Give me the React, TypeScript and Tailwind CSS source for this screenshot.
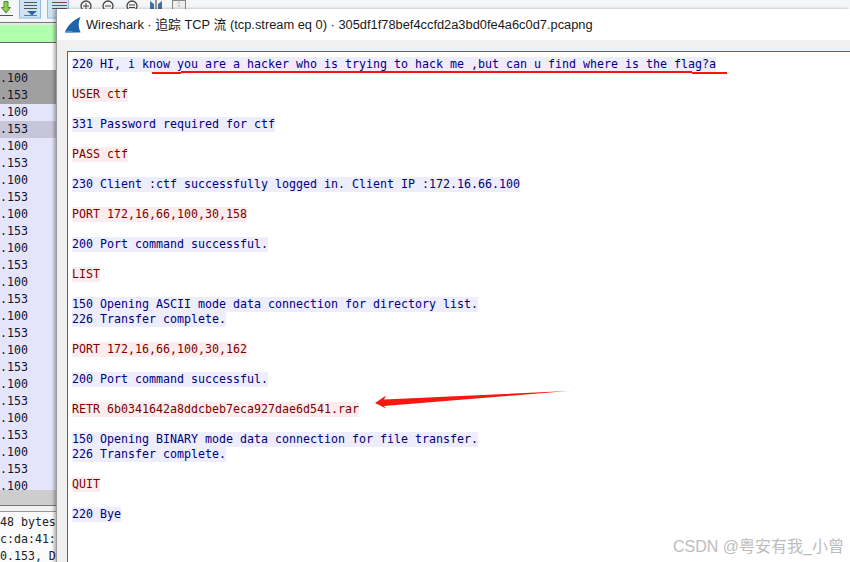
const packets = [
  {text: '.100', bg: 'bg-[#a0a0a0]'},
  {text: '.153', bg: 'bg-[#a0a0a0]'},
  {text: '.100', bg: 'bg-[#e4e4fa]'},
  {text: '.153', bg: 'bg-[#c6c6d8]'},
  ...Array.from({length: 21}, (_, i) => ({
    text: i % 2 === 0 ? '.100' : '.153',
    bg: 'bg-[#e4e4fa]',
  })),
]

// c = client (red), s = server (blue), blank = empty line
const stream: {kind: 'c' | 's' | 'blank'; text?: string}[] = [
  {kind: 's', text: '220 HI, i know you are a hacker who is trying to hack me ,but can u find where is the flag?a'},
  {kind: 'blank'},
  {kind: 'c', text: 'USER ctf'},
  {kind: 'blank'},
  {kind: 's', text: '331 Password required for ctf'},
  {kind: 'blank'},
  {kind: 'c', text: 'PASS ctf'},
  {kind: 'blank'},
  {kind: 's', text: '230 Client :ctf successfully logged in. Client IP :172.16.66.100'},
  {kind: 'blank'},
  {kind: 'c', text: 'PORT 172,16,66,100,30,158'},
  {kind: 'blank'},
  {kind: 's', text: '200 Port command successful.'},
  {kind: 'blank'},
  {kind: 'c', text: 'LIST'},
  {kind: 'blank'},
  {kind: 's', text: '150 Opening ASCII mode data connection for directory list.'},
  {kind: 's', text: '226 Transfer complete.'},
  {kind: 'blank'},
  {kind: 'c', text: 'PORT 172,16,66,100,30,162'},
  {kind: 'blank'},
  {kind: 's', text: '200 Port command successful.'},
  {kind: 'blank'},
  {kind: 'c', text: 'RETR 6b0341642a8ddcbeb7eca927dae6d541.rar'},
  {kind: 'blank'},
  {kind: 's', text: '150 Opening BINARY mode data connection for file transfer.'},
  {kind: 's', text: '226 Transfer complete.'},
  {kind: 'blank'},
  {kind: 'c', text: 'QUIT'},
  {kind: 'blank'},
  {kind: 's', text: '220 Bye'},
]

function ToolbarIcons() {
  return (
    <svg width="200" height="22" viewBox="0 0 200 22">
      {/* go to last packet arrow */}
      <path d="M4 1.5h4v6h2.5L6 13 1.5 7.5H4z" fill="#8fce55" stroke="#4f8a2c" strokeWidth="1" />
      <path d="M0 15.5h13" stroke="#555" />
      {/* auto scroll */}
      <rect x="19.5" y="-1" width="21" height="19" fill="#cde4f7" stroke="#8dbde6" />
      <path d="M24 2.5h13M24 5.5h13M24 8.5h13" stroke="#555" />
      <path d="M27 11h10l-5 4.5z" fill="#2b66b0" />
      <path d="M24 15.5h13" stroke="#777" />
      {/* colorize */}
      <rect x="47.5" y="-1" width="21" height="19" fill="#cde4f7" stroke="#8dbde6" />
      <path d="M52 2.5h15M52 8.5h15" stroke="#555" />
      <path d="M52 5.5h15" stroke="#d8222a" />
      {/* zoom in, out, reset */}
      <circle cx="86" cy="6" r="5" fill="none" stroke="#444" strokeWidth="1.3" />
      <path d="M83 6h6M86 3v6" stroke="#444" />
      <circle cx="108" cy="6" r="5" fill="none" stroke="#444" strokeWidth="1.3" />
      <path d="M105 6h6" stroke="#444" />
      <circle cx="132" cy="6" r="5" fill="none" stroke="#444" strokeWidth="1.3" />
      <path d="M129 5h6M129 7.5h6" stroke="#444" />
      {/* resize columns */}
      <path d="M150 1l4 3v5h-4zM162 1l-4 3v5h4z" fill="#3d6fa8" />
      <path d="M156 0v9" stroke="#333" />
      {/* column box */}
      <rect x="172.5" y="0.5" width="13" height="10" fill="#eee" stroke="#888" />
      <path d="M179 2v6" stroke="#888" strokeDasharray="1.5 1.5" />
    </svg>
  )
}

function BackgroundWindow() {
  return (
    <div className="w-full h-full flex flex-col bg-white overflow-hidden">
      <div className="h-[23px] shrink-0 bg-[#f5f6f7] border-b border-[#777] overflow-hidden">
        <ToolbarIcons />
      </div>
      <div className="h-[20px] shrink-0 bg-[#afffaf] border-t-2 border-[#e8e8e8] border-b border-b-[#666]" />
      <div className="h-[27px] shrink-0 bg-white" />
      <div className="h-[420px] shrink-0 overflow-hidden">
        {packets.map((p, i) => (
          <div key={i} className={`h-[17px] ${p.bg} text-[11.6px] leading-[17px] text-[#12122a] font-['DejaVu_Sans_Mono',monospace]`}>
            {p.text}
          </div>
        ))}
      </div>
      <div className="h-[16px] shrink-0 bg-[#cdcdcd] border-b border-[#777]" />
      <div className="h-[6px] shrink-0 bg-[#f2f2f2] border-b border-[#999]" />
      <div className="flex-1 bg-[#fbfbfb] pt-[2px] text-[11.6px] leading-[17px] text-[#222] whitespace-nowrap font-['DejaVu_Sans_Mono',monospace]">
        <div>48 bytes</div>
        <div>c:da:41:</div>
        <div>0.153, D</div>
      </div>
    </div>
  )
}

function SharkIcon() {
  return (
    <svg width="16" height="16" viewBox="0 0 16 16">
      <path d="M0 15.5 C2 9 8 3 15.5 0 C13 5 13 10 15.5 15.5 Z" fill="#1f63ad" />
      <path d="M0 15.5 C3 13 6 13 9 15.5 Z" fill="#4f95dc" />
    </svg>
  )
}

function StreamLine({kind, text}: {kind: 'c' | 's' | 'blank'; text?: string}) {
  if (kind === 'blank') return <div className="h-[15px]" />
  const cls = kind === 'c' ? 'bg-[#fbeded] text-[#7f0000]' : 'bg-[#ededfb] text-[#00007f]'
  return (
    <div className="h-[15px] leading-[15px]">
      <span className={`inline-block h-[15px] ${cls}`}>{text}</span>
    </div>
  )
}

// red underline and arrow drawn over the screenshot
function Marks() {
  return (
    <svg className="absolute left-[-1px] top-0 pointer-events-none" width="794" height="553" viewBox="56 9 794 553">
      <path d="M152 73 H181" stroke="#f5140f" strokeWidth="2" />
      <path d="M181 72 H692" stroke="#f5140f" strokeWidth="2" />
      <path d="M692 73 H727" stroke="#f5140f" strokeWidth="2" />
      <path d="M568 391 L384 399.5 L386 395.5 L375 403 L386 408.5 L384 406 Z" fill="#f8180f" />
    </svg>
  )
}

export default function App() {
  return (
    <div className="relative w-[850px] h-[562px] overflow-hidden bg-white font-['Liberation_Sans',sans-serif]">
      <BackgroundWindow />
      <div className="absolute left-[56px] top-[9px] right-0 bottom-0 flex flex-col bg-[#f0f0f0] border-l border-[#9a9a9a] shadow-[-2px_0_3px_rgba(0,0,0,0.3)]">
        <div className="h-[31px] shrink-0 bg-white flex items-center gap-[5px] pl-[8px] pt-[1px]">
          <SharkIcon />
          <span className="text-[12.85px] text-[#1a1a1a] whitespace-nowrap font-['Liberation_Sans','Noto_Sans_CJK_SC',sans-serif]">
            Wireshark · 追踪 TCP 流 (tcp.stream eq 0) · 305df1f78bef4ccfd2a3bd0fe4a6c0d7.pcapng
          </span>
        </div>
        <div className="h-[11px] shrink-0" />
        <div className="flex-1 ml-[10px] bg-white border-l border-t border-[#1f73c4] pl-[4px] pt-[5px] text-[11.63px] whitespace-pre font-['DejaVu_Sans_Mono',monospace] overflow-hidden">
          {stream.map((line, i) => (
            <StreamLine key={i} kind={line.kind} text={line.text} />
          ))}
        </div>
        <Marks />
        <div className="absolute right-[6px] bottom-[5px] text-[16px] leading-[20px] text-[#bdbdbd] font-['Liberation_Sans','Noto_Sans_CJK_SC',sans-serif]">
          CSDN @粤安有我_小曾
        </div>
      </div>
    </div>
  )
}
